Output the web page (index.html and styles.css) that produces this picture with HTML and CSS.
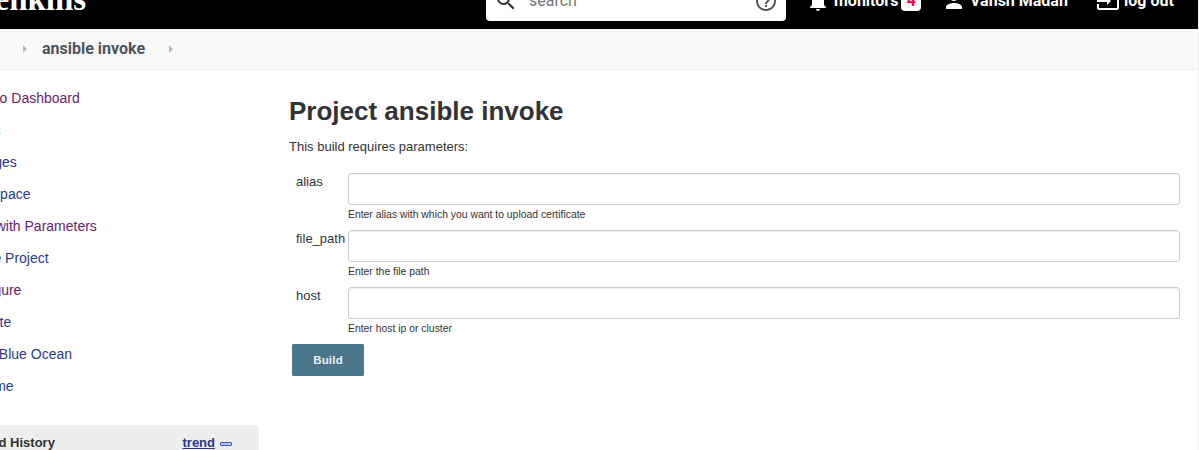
FILE: index.html
```html
<!DOCTYPE html>
<html lang="en">
<head>
<meta charset="utf-8">
<title>ansible invoke [Jenkins]</title>
<link rel="stylesheet" href="styles.css">
</head>
<body>
<div class="page">
  <header class="header">
    <div class="brand">Jenkins</div>
    <div class="search">
      <svg class="search-icon" viewBox="0 0 24 24"><path fill="#333" d="M15.5 14h-.79l-.28-.27A6.47 6.47 0 0 0 16 9.5 6.5 6.5 0 1 0 9.5 16c1.61 0 3.09-.59 4.23-1.57l.27.28v.79l5 4.99L20.49 19l-4.99-5zm-6 0C7.01 14 5 11.99 5 9.5S7.01 5 9.5 5 14 7.01 14 9.5 11.99 14 9.5 14z"/></svg>
      <span class="search-text">search</span>
      <svg class="help-icon" viewBox="0 0 24 24"><path fill="#4d545d" d="M11 18h2v-2h-2v2zm1-16C6.48 2 2 6.48 2 12s4.48 10 10 10 10-4.48 10-10S17.52 2 12 2zm0 18c-4.41 0-8-3.59-8-8s3.59-8 8-8 8 3.59 8 8-3.59 8-8 8zm0-14c-2.21 0-4 1.79-4 4h2c0-1.1.9-2 2-2s2 .9 2 2c0 2-3 1.75-3 5h2c0-2.25 3-2.5 3-5 0-2.21-1.79-4-4-4z"/></svg>
    </div>
    <div class="nav monitors">
      <svg viewBox="0 0 24 24"><path fill="#fff" d="M12 22c1.1 0 2-.9 2-2h-4c0 1.1.89 2 2 2zm6-6v-5c0-3.07-1.64-5.64-4.5-6.32V4c0-.83-.67-1.500-1.500-1.500s-1.500.67-1.500 1.500v.68C7.630 5.360 6 7.920 6 11v5l-2 2v1h16v-1l-2-2z"/></svg>
      <span class="nav-text">monitors</span><span class="badge">4</span>
    </div>
    <div class="nav user">
      <svg viewBox="0 0 24 24"><path fill="#fff" d="M12 12c2.210 0 4-1.790 4-4s-1.790-4-4-4-4 1.790-4 4 1.790 4 4 4zm0 2c-2.670 0-8 1.340-8 4v2h16v-2c0-2.660-5.330-4-8-4z"/></svg>
      <span class="nav-text">Vansh Madan</span>
    </div>
    <div class="nav logout">
      <svg viewBox="0 0 24 24"><path fill="#fff" d="M21 3.010H3c-1.100 0-2 .9-2 2V9h2V4.990h18v14.030H3V15H1v4.010c0 1.100.9 1.980 2 1.980h18c1.100 0 2-.88 2-1.980v-14c0-1.110-.9-2-2-2zM11 16l4-4-4-4v3H1v2h10v3z"/></svg>
      <span class="nav-text">log out</span>
    </div>
  </header>
  <nav class="crumbs">
    <i class="arrow"></i><span class="crumb">ansible invoke</span><i class="arrow"></i>
  </nav>
  <div class="body">
    <aside class="side">
      <a class="task visited">Back to Dashboard</a>
      <a class="task">Status</a>
      <a class="task">Changes</a>
      <a class="task">Workspace</a>
      <a class="task visited">Build with Parameters</a>
      <a class="task">Delete Project</a>
      <a class="task visited">Configure</a>
      <a class="task">Favorite</a>
      <a class="task">Open Blue Ocean</a>
      <a class="task">Rename</a>
      <div class="history"><b class="history-title">Build History</b><a class="trend">trend</a><i class="collapse"></i></div>
    </aside>
    <main class="main">
      <h1 class="title">Project ansible invoke</h1>
      <p class="intro">This build requires parameters:</p>
      <div class="row"><label class="label">alias</label><div class="field"><input class="input" type="text"><div class="hint">Enter alias with which you want to upload certificate</div></div></div>
      <div class="row"><label class="label">file_path</label><div class="field"><input class="input" type="text"><div class="hint">Enter the file path</div></div></div>
      <div class="row"><label class="label">host</label><div class="field"><input class="input" type="text"><div class="hint">Enter host ip or cluster</div></div></div>
      <button class="build">Build</button>
    </main>
  </div>
</div>
</body>
</html>
```
FILE: styles.css
```css
* { box-sizing: border-box; }
body {
  margin: 0;
  height: 450px;
  overflow: hidden;
  background: #fff;
  color: #333;
  font: 13px "Liberation Sans", Arial, sans-serif;
}
.page {
  width: 1199px;
  height: 477px;
  margin-top: -27px;
  border-right: 1px solid #eee;
  overflow: hidden;
}
.header {
  display: flex;
  align-items: center;
  height: 56px;
  background: #000;
  color: #fff;
  font: 700 16px Roboto, sans-serif;
}
.brand {
  width: 508px;
  height: 60px;
  margin-left: -22px;
  font: bold 33px/56px "Liberation Serif", serif;
  flex: none;
}
.search {
  display: flex;
  align-items: center;
  flex: none;
  width: 300px;
  height: 40px;
  padding: 0 8px;
  border-radius: 4px;
  background: #fff;
}
.search-icon { width: 24px; height: 24px; }
.search-text { flex: 1; margin-left: 11px; padding-bottom: 2px; color: #757575; font-weight: 400; }
.help-icon { width: 24px; height: 24px; }
.nav { display: flex; align-items: center; flex: none; white-space: nowrap; }
.nav svg { width: 24px; height: 24px; flex: none; }
.nav-text { margin-left: 4px; padding-bottom: 2px; }
.monitors { margin-left: 20px; width: 136px; }
.badge {
  width: 20px;
  height: 20px;
  margin-left: 3px;
  border-radius: 4px;
  background: #fff;
  color: #ff0040;
  font-weight: 700;
  line-height: 19px;
  text-align: center;
}
.user { width: 154px; }
.crumbs {
  display: flex;
  align-items: center;
  height: 41px;
  padding: 0 0 2px 23px;
  border-bottom: 1px solid #ececec;
  background: #f8f8f8;
  color: #4d545d;
  font: 700 16px Roboto, sans-serif;
}
.arrow {
  margin-top: 2px;
  border-left: 4px solid #b5b5b5;
  border-top: 4px solid transparent;
  border-bottom: 4px solid transparent;
}
.crumb { margin: 0 24px 0 15px; }
.body { display: flex; }
.side { width: 259px; padding-top: 12px; flex: none; }
.task {
  display: block;
  height: 32px;
  margin-left: -39.3px;
  color: #2a3990;
  font-size: 14px;
  line-height: 32px;
  white-space: nowrap;
}
.task.visited { color: #6a1b6e; }
.history {
  display: flex;
  height: 60px;
  margin-top: 23px;
  padding-right: 27px;
  border-radius: 0 5px 0 0;
  background: #eee;
  line-height: 35px;
}
.history-title { margin-left: -26px; flex: 1; }
.trend { color: #2a3990; font-weight: 700; text-decoration: underline; }
.collapse {
  width: 12px;
  height: 4px;
  margin: 17px 0 0 5px;
  border: 1px solid #3f5db5;
  border-radius: 1px;
  background: #b5c8f4;
}
.main { flex: 1; padding: 26px 18px 0 30px; }
.title { margin: 0; font-size: 26px; line-height: 30px; }
.intro { margin: 13px 0 19px; line-height: 15px; }
.row { display: flex; height: 57px; }
.label { width: 59px; padding-left: 7px; line-height: 17px; flex: none; }
.field { flex: 1; }
.input {
  display: block;
  width: 100%;
  height: 32px;
  border: 1px solid #ccc;
  border-radius: 3px;
  background: #fff;
  box-shadow: inset 0 1px 1px rgba(0, 0, 0, .075);
}
.hint { font-size: 10.4px; line-height: 20px; }
.build {
  display: block;
  width: 72px;
  height: 32px;
  margin-left: 3px;
  padding: 0;
  border: 1px solid #4a7b99;
  border-radius: 1px;
  background: #4b758b;
  color: #eee;
  font: bold 11.5px "Liberation Sans", Arial, sans-serif;
  letter-spacing: .2px;
}
```
